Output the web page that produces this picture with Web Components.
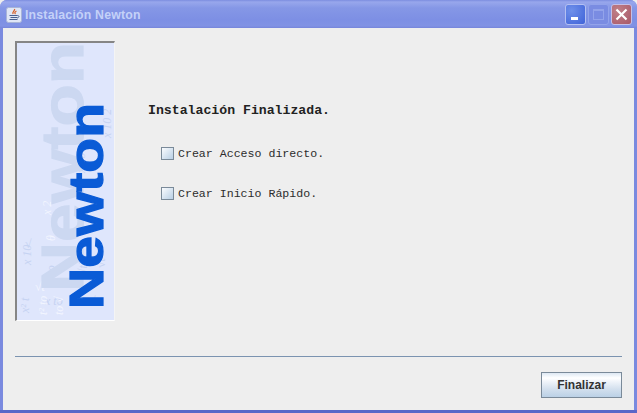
<!DOCTYPE html>
<html>
<head>
<meta charset="utf-8">
<title>Instalación Newton</title>
<style>
    html, body { margin: 0; padding: 0; height: 100%; overflow: hidden; }
    body { background: #eeeeee; }
</style>
</head>
<body>
<install-window>
    <title-bar slot="title">Instalación Newton</title-bar>
    <side-banner slot="side"></side-banner>
    <h-message slot="main">Instalación Finalizada.</h-message>
    <check-option slot="main">Crear Acceso directo.</check-option>
    <check-option slot="main">Crear Inicio Rápido.</check-option>
    <metal-button slot="action">Finalizar</metal-button>
</install-window>
<script>
class InstallWindow extends HTMLElement
{
    constructor()
    {
        super();
        this.shadow = this.attachShadow({mode: "open"});
    }
    connectedCallback()
    {
        this.shadow.innerHTML = `
            <style>
                :host {
                    display: flex;
                    flex-direction: column;
                    box-sizing: border-box;
                    width: 637px;
                    height: 413px;
                    background: #7a8adf;
                    border-bottom: 3px solid #5a67c8;
                    border-radius: 7px 7px 0 0;
                    overflow: hidden;
                }
                .frame {
                    flex: 1;
                    display: flex;
                    flex-direction: column;
                    margin: 0 3px;
                    background: #eeeeee;
                    min-height: 0;
                }
                .content {
                    flex: 1;
                    display: flex;
                    padding: 13px 12px 0 12px;
                    gap: 33px;
                    min-height: 0;
                }
                .main {
                    display: flex;
                    flex-direction: column;
                    padding-top: 62px;
                }
                .rule {
                    height: 1px;
                    background: #7b93b0;
                    margin: 0 12px;
                }
                .footer {
                    display: flex;
                    justify-content: flex-end;
                    padding: 15px 12px 12px 0;
                }
            </style>
            <slot name="title"></slot>
            <div class="frame">
                <div class="content">
                    <slot name="side"></slot>
                    <div class="main"><slot name="main"></slot></div>
                </div>
                <div class="rule"></div>
                <div class="footer"><slot name="action"></slot></div>
            </div>
        `;
    }
}
class TitleBar extends HTMLElement
{
    constructor()
    {
        super();
        this.shadow = this.attachShadow({mode: "open"});
    }
    connectedCallback()
    {
        this.shadow.innerHTML = `
            <style>
                :host {
                    display: flex;
                    align-items: center;
                    box-sizing: border-box;
                    height: 28px;
                    padding: 1px 5px 0 6px;
                    background: linear-gradient(#7c8ddf 0, #98a7ec 2px, #8597e6 8px, #7d8fe4 20px, #8192e4 26px, #7585da 28px);
                    color: #c4d1f8;
                    font: bold 12.3px "Liberation Sans", sans-serif;
                }
                .icon { width: 16px; height: 16px; margin-right: 3px; }
                .text { flex: 1; letter-spacing: 0.2px; }
                .btns { display: flex; gap: 2px; margin-top: -1px; }
                .btn {
                    box-sizing: border-box;
                    width: 21px;
                    height: 21px;
                    border: 1px solid #b4c0f2;
                    border-radius: 3px;
                    display: block;
                }
                .min { background: radial-gradient(circle at 30% 30%, #6f90ea, #3f62d8); }
                .max { background: #7a8ce2; border-color: #93a3ea; }
                .close { background: radial-gradient(circle at 30% 30%, #c08088, #a85868); border-color: #c4bfe6; }
            </style>
            <svg class="icon" viewBox="0 0 16 16">
                <rect x="0.5" y="0.5" width="15" height="15" rx="2" fill="#dfe6f6" stroke="#a8b4d8"/>
                <path d="M8.5 2c1 1.5-2.5 2.5-1.5 5M10.5 4c-2 1-2 2-1 3" stroke="#d8622a" stroke-width="1.3" fill="none"/>
                <path d="M3.5 8.5h8M4.5 10.5h6.5M3.5 12.5h8" stroke="#4a6090" stroke-width="1.1"/>
                <path d="M11.5 8.5c2 0 2 2-.5 2.5" stroke="#4a6090" fill="none"/>
            </svg>
            <span class="text"><slot></slot></span>
            <div class="btns">
                <svg class="btn min" viewBox="0 0 19 19"><rect x="5" y="12" width="7" height="3" fill="#fff"/></svg>
                <svg class="btn max" viewBox="0 0 19 19"><rect x="4.5" y="4.5" width="10" height="10" fill="none" stroke="#93a3ea"/><rect x="4" y="4" width="11" height="2" fill="#93a3ea"/></svg>
                <svg class="btn close" viewBox="0 0 19 19"><path d="M4.5 4.5l10 10M14.5 4.5l-10 10" stroke="#fff" stroke-width="2.2"/></svg>
            </div>
        `;
    }
}
class SideBanner extends HTMLElement
{
    constructor()
    {
        super();
        this.shadow = this.attachShadow({mode: "open"});
    }
    connectedCallback()
    {
        // scribbled formulas at the foot of the banner
        const bits = [
            [28, 262, "x to", 0, "bit"], [12, 270, "x² t", -90, "bit"], [18, 248, "√t²", 0, "pale"],
            [38, 240, "x to", -90, "bit"], [30, 272, "t² to", -90, "pale"], [46, 272, "to √", -90, "pale"],
            [72, 262, "√t²", 0, "bit"], [70, 232, "√t²", -90, "bit"], [38, 198, "θ", -90, "pale"],
            [34, 172, "x 2", -90, "pale"], [68, 130, "x 10", -90, "bit"], [94, 95, "x 10 2", -90, "bit"],
            [14, 222, "x 10", -90, "bit"], [8, 205, "√", 0, "bit"], [88, 225, "√t²", -90, "bit"]
        ];
        const marks = bits.map(b =>
            `<text x="${b[0]}" y="${b[1]}" transform="rotate(${b[3]} ${b[0]} ${b[1]})" class="${b[4]}">${b[2]}</text>`
        ).join("");
        this.shadow.innerHTML = `
            <style>
                :host {
                    display: block;
                    box-sizing: border-box;
                    width: 100px;
                    height: 280px;
                    border-top: 2px solid #858585;
                    border-left: 2px solid #858585;
                    border-right: 1px solid #f4f4f4;
                    border-bottom: 1px solid #ffffff;
                    background: #dfe6fc;
                }
                svg { display: block; width: 97px; height: 277px; }
                .bit { font: italic 12px "Liberation Serif", serif; fill: #c6d3f2; }
                .pale { font: italic 12px "Liberation Serif", serif; fill: #f2f5ff; }
                .ghost { font: bold 60px "Liberation Sans", sans-serif; fill: #ccd8f1; stroke: #ccd8f1; stroke-width: 1.2; }
                .word { font: bold 49px "Liberation Sans", sans-serif; fill: #0a5bd6; stroke: #0a5bd6; stroke-width: 1.2; }
            </style>
            <svg viewBox="0 0 97 277">
                ${marks}
                <text class="ghost" x="66" y="249" textLength="250" lengthAdjust="spacingAndGlyphs" transform="rotate(-90 66 249)">Newton</text>
                <text class="word" x="86" y="266" textLength="206" lengthAdjust="spacingAndGlyphs" transform="rotate(-90 86 266)">Newton</text>
            </svg>
        `;
    }
}
class HMessage extends HTMLElement
{
    constructor()
    {
        super();
        this.shadow = this.attachShadow({mode: "open"});
    }
    connectedCallback()
    {
        this.shadow.innerHTML = `
            <style>
                :host {
                    display: block;
                    color: #222222;
                    font: bold 13.2px/15px "Liberation Mono", monospace;
                    margin-bottom: 29px;
                }
            </style>
            <slot></slot>
        `;
    }
}
class CheckOption extends HTMLElement
{
    constructor()
    {
        super();
        this.shadow = this.attachShadow({mode: "open"});
    }
    connectedCallback()
    {
        this.shadow.innerHTML = `
            <style>
                :host {
                    display: flex;
                    align-items: center;
                    height: 13px;
                    margin: 0 0 27px 13px;
                    color: #2c2c2c;
                    font: 11.6px/13px "Liberation Mono", monospace;
                }
                .box {
                    box-sizing: border-box;
                    width: 13px;
                    height: 13px;
                    margin-right: 4px;
                    border: 1px solid #7a8a99;
                    background: linear-gradient(135deg, #fafcfe, #b8cfe5);
                }
            </style>
            <span class="box"></span>
            <slot></slot>
        `;
    }
}
class MetalButton extends HTMLElement
{
    constructor()
    {
        super();
        this.shadow = this.attachShadow({mode: "open"});
    }
    connectedCallback()
    {
        this.shadow.innerHTML = `
            <style>
                :host {
                    display: flex;
                    align-items: center;
                    justify-content: center;
                    box-sizing: border-box;
                    width: 81px;
                    height: 26px;
                    border: 1px solid #7a8a99;
                    background: linear-gradient(#dde8f3 0, #ffffff 5px, #eef3f9 9px, #d3e0ee 16px, #b8cfe5 25px);
                    color: #333333;
                    font: bold 12px "Liberation Sans", sans-serif;
                }
            </style>
            <slot></slot>
        `;
    }
}
customElements.define('install-window', InstallWindow);
customElements.define('title-bar', TitleBar);
customElements.define('side-banner', SideBanner);
customElements.define('h-message', HMessage);
customElements.define('check-option', CheckOption);
customElements.define('metal-button', MetalButton);
</script>
</body>
</html>
